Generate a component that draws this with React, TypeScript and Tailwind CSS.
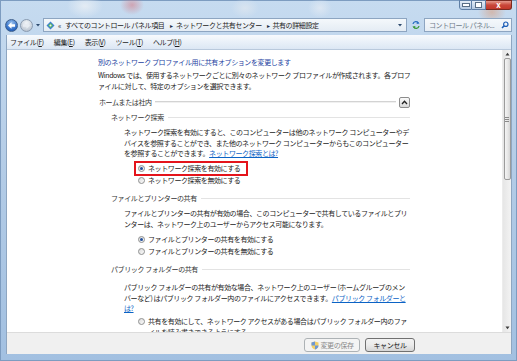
import React from "react";

const L = ({ children, className = "" }: { children?: React.ReactNode; className?: string }) => (
  <div className={"h-[10.5px] leading-[10.5px] whitespace-nowrap " + className}>{children}</div>
);

const Radio = ({ checked }: { checked?: boolean }) => (
  <span className="inline-flex w-[7px] h-[7px] rounded-full border border-[#8e8f8f] bg-gradient-to-br from-[#dcdcdc] to-[#fbfbfb] items-center justify-center shrink-0">
    {checked && <span className="w-[3px] h-[3px] rounded-full bg-[#24519c]" />}
  </span>
);

const RadioRow = ({ checked, children, className = "" }: { checked?: boolean; children: React.ReactNode; className?: string }) => (
  <div className={"h-[10.5px] flex items-center pl-[40px] whitespace-nowrap " + className}>
    <Radio checked={checked} />
    <span className="ml-[3px] leading-[10.5px]">{children}</span>
  </div>
);

const SubHeader = ({ children, className = "" }: { children: React.ReactNode; className?: string }) => (
  <div className={"h-[10.5px] flex items-center pl-[13px] " + className}>
    <span className="leading-[10.5px] whitespace-nowrap text-[#333]">{children}</span>
    <span className="flex-1 h-px bg-[#e3e3e3] ml-[4px]" />
  </div>
);

export default function App() {
  return (
    <div className="w-[517px] h-[361px] overflow-hidden flex flex-col bg-gradient-to-b from-[#c6dbf0] via-[#b2cbe6] to-[#a2c0e1] shadow-[inset_0_0_0_1px_#7d9cc0] font-['Noto_Sans_CJK_JP','Noto_Sans',sans-serif] text-[7px] tracking-[-0.4px] text-[#1b1b1b]">
      {/* Title / glass area */}
      <div className="h-[35px] flex flex-col shrink-0 bg-[radial-gradient(ellipse_18px_12px_at_85px_6px,rgba(235,240,245,0.8),transparent),radial-gradient(ellipse_12px_10px_at_132px_5px,rgba(214,120,130,0.55),transparent),radial-gradient(ellipse_14px_10px_at_245px_8px,rgba(225,232,240,0.7),transparent),radial-gradient(ellipse_12px_10px_at_320px_8px,rgba(230,236,244,0.7),transparent),radial-gradient(ellipse_14px_12px_at_492px_12px,rgba(222,150,110,0.5),transparent)]">
        <div className="h-[18px] flex justify-end items-start pr-[5px]">
          <div className="flex h-[10px]">
            <div className="w-[13px] h-[10px] border border-[#5f7fa6] rounded-bl-[3px] bg-gradient-to-b from-[#e3ecf6] to-[#b5cae2] flex items-end justify-center pb-[2px]">
              <span className="w-[6px] h-[2px] bg-white border border-[#5a6f86] box-content" />
            </div>
            <div className="w-[14px] h-[10px] border-y border-r border-[#5f7fa6] bg-gradient-to-b from-[#e3ecf6] to-[#b5cae2] flex items-center justify-center">
              <span className="w-[5px] h-[4px] border-2 border-white outline outline-1 outline-[#5a6f86]" />
            </div>
            <div className="w-[26px] h-[10px] border-y border-r border-[#7a2a20] rounded-br-[3px] bg-gradient-to-b from-[#e49a8e] via-[#c9473a] to-[#c2382a] flex items-center justify-center">
              <span className="text-white font-bold text-[8px] leading-[8px] tracking-normal">x</span>
            </div>
          </div>
        </div>
        <div className="h-[14px] flex items-center pl-[5px] pr-[5px]">
          {/* back */}
          <div className="w-[13px] h-[13px] rounded-full border border-[#3d5f8c] bg-[radial-gradient(circle_at_50%_30%,#9cc4f0,#2a68c4_70%,#1d4f9c)] flex items-center justify-center shrink-0">
            <svg width="9" height="9" viewBox="0 0 9 9">
              <path d="M1 4.5 L4.5 1.2 L4.5 3.2 L8 3.2 L8 5.8 L4.5 5.8 L4.5 7.8 Z" fill="white" />
            </svg>
          </div>
          {/* forward */}
          <div className="w-[13px] h-[13px] ml-[2px] rounded-full border border-[#8a9bb0] bg-[radial-gradient(circle_at_50%_30%,#f4f7fa,#c3ccd7_70%,#a7b3c2)] flex items-center justify-center shrink-0">
            <svg width="9" height="9" viewBox="0 0 9 9">
              <path d="M8 4.5 L4.5 1.2 L4.5 3.2 L1 3.2 L1 5.8 L4.5 5.8 L4.5 7.8 Z" fill="#e7ecf2" />
            </svg>
          </div>
          <svg width="6" height="6" viewBox="0 0 6 6" className="ml-[2px] shrink-0">
            <path d="M1 2 L5 2 L3 4.5 Z" fill="#2d4a6e" />
          </svg>
          {/* address box */}
          <div className="ml-[2px] w-[364px] h-[14px] border border-[#8da5c1] bg-gradient-to-b from-[#f4f8fb] to-[#e4ecf4] flex items-center pl-[2px] shrink-0">
            <svg width="9" height="9" viewBox="0 0 9 9" className="shrink-0">
              <path d="M4.5 0.5 L8.5 4.5 L4.5 8.5 L0.5 4.5 Z" fill="#3b7fd4" />
              <path d="M4.5 2 L7 4.5 L4.5 7 L2 4.5 Z" fill="#5fb85a" />
              <circle cx="4.5" cy="4.5" r="1" fill="#e9f3ff" />
            </svg>
            <span className="ml-[3px] text-[#1d2f46] leading-[12px]">«</span>
            <span className="ml-[4px] leading-[12px] whitespace-nowrap">すべてのコントロール パネル項目</span>
            <span className="ml-[6px] text-[6px] text-[#1d2f46]">▸</span>
            <span className="ml-[3px] leading-[12px] whitespace-nowrap">ネットワークと共有センター</span>
            <span className="ml-[5px] text-[6px] text-[#1d2f46]">▸</span>
            <span className="ml-[3px] leading-[12px] whitespace-nowrap">共有の詳細設定</span>
            <span className="flex-1" />
            <svg width="6" height="6" viewBox="0 0 6 6" className="mr-[3px] shrink-0">
              <path d="M1 2 L5 2 L3 4.5 Z" fill="#2d4a6e" />
            </svg>
          </div>
          {/* refresh */}
          <div className="w-[17px] h-[14px] flex items-center justify-center shrink-0">
            <svg width="10" height="10" viewBox="0 0 10 10">
              <path d="M2 4 A3 3 0 0 1 7.5 3" stroke="#2a6fc2" strokeWidth="1.3" fill="none" />
              <path d="M6 1.2 L8.6 3.4 L5.6 4 Z" fill="#2a6fc2" />
              <path d="M8 6 A3 3 0 0 1 2.5 7" stroke="#3a9a3a" strokeWidth="1.3" fill="none" />
              <path d="M4 8.8 L1.4 6.6 L4.4 6 Z" fill="#3a9a3a" />
            </svg>
          </div>
          {/* search */}
          <div className="flex-1 h-[14px] border border-[#8da5c1] bg-gradient-to-b from-[#f4f8fb] to-[#e7eef5] flex items-center pl-[4px] pr-[2px]">
            <span className="text-[#6f7c8a] leading-[12px] whitespace-nowrap">コントロール パネル...</span>
            <span className="flex-1" />
            <svg width="8" height="8" viewBox="0 0 8 8">
              <circle cx="4.8" cy="3.2" r="2.2" stroke="#1d5fb8" strokeWidth="1.2" fill="none" />
              <path d="M3.2 4.8 L1 7" stroke="#1d5fb8" strokeWidth="1.6" />
            </svg>
          </div>
        </div>
      </div>

      {/* client area */}
      <div className="flex-1 flex flex-col ml-[6px] mr-[5px] border-x border-[#8ea6c1] min-h-0">
        {/* menu bar */}
        <div className="h-[15px] shrink-0 flex items-center pl-[3px] gap-[10px] bg-gradient-to-b from-[#f7fafd] to-[#dce7f4] border-b border-[#b9c9dc] text-[#1e1e1e]">
          <span>ファイル(<u>F</u>)</span>
          <span>編集(<u>E</u>)</span>
          <span>表示(<u>V</u>)</span>
          <span>ツール(<u>T</u>)</span>
          <span>ヘルプ(<u>H</u>)</span>
        </div>

        {/* content + scrollbar */}
        <div className="flex-1 flex bg-white min-h-0">
          <div className="flex-1 pl-[91px] overflow-hidden">
            <div className="w-[312px]">
              <L className="mt-[7px] text-[#1d3f9f]">別のネットワーク プロファイル用に共有オプションを変更します</L>
              <L className="mt-[2.5px]">Windows では、使用するネットワークごとに別々のネットワーク プロファイルが作成されます。各プロフ</L>
              <L>ァイルに対して、特定のオプションを選択できます。</L>

              <div className="mt-[6px] h-[10.5px] flex items-center pl-[1px]">
                <span className="leading-[10.5px] whitespace-nowrap text-[#333]">ホームまたは社内</span>
                <span className="flex-1 h-[2px] border-t border-[#d3d3d3] border-b border-b-[#f0f0f0] ml-[3px]" />
                <span className="ml-[3px] w-[11px] h-[11px] border border-[#8c8c8c] rounded-[2px] bg-gradient-to-b from-[#fbfbfb] to-[#d9d9d9] flex items-center justify-center">
                  <svg width="7" height="5" viewBox="0 0 7 5">
                    <path d="M1 4 L3.5 1.3 L6 4" stroke="#222" strokeWidth="1.3" fill="none" />
                  </svg>
                </span>
              </div>

              <SubHeader className="mt-[4.5px]">ネットワーク探索</SubHeader>
              <div className="pl-[26px] mt-[4.5px]">
                <L>ネットワーク探索を有効にすると、このコンピューターは他のネットワーク コンピューターやデ</L>
                <L>バイスを参照することができ、また他のネットワーク コンピューターからもこのコンピューター</L>
                <L>
                  を参照することができます。<span className="text-[#0b63c5] underline">ネットワーク探索とは?</span>
                </L>
              </div>
              <div className="relative mt-[4.5px]">
                <RadioRow checked>ネットワーク探索を有効にする</RadioRow>
                <RadioRow className="mt-[1.5px]">ネットワーク探索を無効にする</RadioRow>
                <div className="absolute left-[36px] top-[-2px] w-[114px] h-[15px] border-2 border-[#e4141b]" />
              </div>

              <SubHeader className="mt-[7.5px]">ファイルとプリンターの共有</SubHeader>
              <div className="pl-[26px] mt-[4.5px]">
                <L>ファイルとプリンターの共有が有効の場合、このコンピューターで共有しているファイルとプリ</L>
                <L>ンターは、ネットワーク上のユーザーからアクセス可能になります。</L>
              </div>
              <RadioRow checked className="mt-[5px]">ファイルとプリンターの共有を有効にする</RadioRow>
              <RadioRow className="mt-[1.5px]">ファイルとプリンターの共有を無効にする</RadioRow>

              <SubHeader className="mt-[7.5px]">パブリック フォルダーの共有</SubHeader>
              <div className="pl-[26px] mt-[7.5px]">
                <L>パブリック フォルダーの共有が有効な場合、ネットワーク上のユーザー (ホームグループのメン</L>
                <L>
                  バーなど) はパブリック フォルダー内のファイルにアクセスできます。<span className="text-[#0b63c5] underline">パブリック フォルダーと</span>
                </L>
                <L>
                  <span className="text-[#0b63c5] underline">は?</span>
                </L>
              </div>
              <RadioRow className="mt-[2.5px]">共有を有効にして、ネットワーク アクセスがある場合はパブリック フォルダー内のファ</RadioRow>
              <L className="pl-[50px]">イルを読み書きできるようにする</L>
            </div>
          </div>

          {/* scrollbar */}
          <div className="w-[9px] shrink-0 flex flex-col bg-gradient-to-r from-[#e6e6e6] to-[#f3f3f3] border-l border-[#ececec]">
            <div className="h-[8px] flex items-center justify-center">
              <svg width="5" height="4" viewBox="0 0 5 4"><path d="M0.5 3.5 L2.5 0.8 L4.5 3.5 Z" fill="#3d3d3d" /></svg>
            </div>
            <div className="h-[122px] mx-[0.5px] rounded-[2px] border border-[#9b9b9b] bg-gradient-to-r from-[#f4f4f4] via-[#e8e8e8] to-[#d6d6d6] flex items-center justify-center">
              <div className="w-[4px] flex flex-col gap-[1px]">
                <span className="h-px bg-[#8a8a8a]" />
                <span className="h-px bg-[#8a8a8a]" />
                <span className="h-px bg-[#8a8a8a]" />
              </div>
            </div>
            <div className="flex-1" />
            <div className="h-[8px] flex items-center justify-center">
              <svg width="5" height="4" viewBox="0 0 5 4"><path d="M0.5 0.5 L2.5 3.2 L4.5 0.5 Z" fill="#3d3d3d" /></svg>
            </div>
          </div>
        </div>

        {/* bottom bar */}
        <div className="h-[22px] shrink-0 bg-[#f0f0f0] border-t border-[#dcdcdc] flex items-start justify-end pt-[5px] pr-[96px] gap-[5px]">
          <div className="w-[56px] h-[14px] rounded-[3px] border border-[#adb2b5] bg-[#f4f4f4] flex items-center justify-center text-[#8a8a8a]">
            <svg width="8" height="9" viewBox="0 0 8 9" className="mr-[2px] opacity-70">
              <path d="M4 0.5 L7.5 1.6 L7.5 4.5 C7.5 6.6 5.8 7.8 4 8.6 C2.2 7.8 0.5 6.6 0.5 4.5 L0.5 1.6 Z" fill="#f2c230" />
              <path d="M4 0.5 L4 4.5 L0.5 4.5 L0.5 1.6 Z" fill="#3470c9" />
              <path d="M4 4.5 L7.5 4.5 C7.5 6.6 5.8 7.8 4 8.6 Z" fill="#3470c9" />
            </svg>
            <span className="leading-[12px]">変更の保存</span>
          </div>
          <div className="w-[50px] h-[14px] rounded-[3px] border border-[#707070] bg-gradient-to-b from-[#f2f2f2] via-[#ebebeb] to-[#d6d6d6] flex items-center justify-center text-[#111]">
            <span className="leading-[12px]">キャンセル</span>
          </div>
        </div>
      </div>
      <div className="h-[7px] shrink-0" />
    </div>
  );
}
